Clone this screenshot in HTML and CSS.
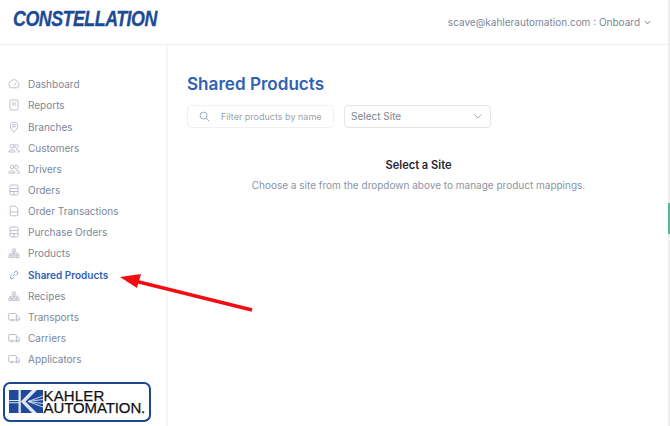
FILE: index.html
```html
<!DOCTYPE html>
<html lang="en">
<head>
<meta charset="utf-8">
<title>Shared Products</title>
<link rel="stylesheet" href="styles.css">
</head>
<body>
<svg width="0" height="0" class="defs">
  <symbol id="i-gauge" viewBox="0 0 12 12"><path d="M2.300 9.800a4.800 4.800 0 1 1 7.400 0z M6 7.500 8 4.500"/></symbol>
  <symbol id="i-doc" viewBox="0 0 12 12"><rect x="2" y="1" width="8" height="10" rx="1"/><path d="M4 4h4M4 6h4"/></symbol>
  <symbol id="i-pin" viewBox="0 0 12 12"><path d="M6 11.300C3.800 8.800 2.300 7 2.300 4.800a3.700 3.700 0 0 1 7.400 0C9.700 7 8.200 8.800 6 11.300z"/><circle cx="6" cy="4.800" r="1.400"/></symbol>
  <symbol id="i-users" viewBox="0 0 12 12"><circle cx="4" cy="4" r="1.800"/><circle cx="8.300" cy="4" r="1.800"/><path d="M.8 10c0-3 6.200-3 6.200 0zM8 7.400c1.800 0 3.300.9 3.300 2.600H9"/></symbol>
  <symbol id="i-calc" viewBox="0 0 12 12"><rect x="2" y="1" width="8" height="10" rx="1.200"/><path d="M2 4.500h8M2 7.500h8M6 7.500V11"/></symbol>
  <symbol id="i-file" viewBox="0 0 12 12"><path d="M2.200 2.200a1 1 0 0 1 1-1h4l2.600 2.600v6a1 1 0 0 1-1 1H3.200a1 1 0 0 1-1-1zM2.200 7h7.600"/></symbol>
  <symbol id="i-tree" viewBox="0 0 12 12"><rect x="4.800" y="2" width="2.400" height="2.400"/><rect x="1" y="8" width="2.400" height="2.400"/><rect x="4.800" y="8" width="2.400" height="2.400"/><rect x="8.600" y="8" width="2.400" height="2.400"/><path d="M6 4.400V8M2.200 8V6.200h7.600V8"/></symbol>
  <symbol id="i-link" viewBox="0 0 12 12"><path d="M5 7 7.200 4.800M4.300 5.500 2.800 7a1.600 1.600 0 0 0 2.300 2.300l1.500-1.500M5.500 4.300 7 2.800a1.600 1.600 0 0 1 2.300 2.300L7.800 6.600"/></symbol>
  <symbol id="i-truck" viewBox="0 0 12 12"><path d="M3 9H1.500a.8.800 0 0 1-.8-.8V3.300a.8.800 0 0 1 .8-.8h6a.8.800 0 0 1 .8.800V9H5M8.300 4.800h1.500l1.500 1.700V9h-1M8.300 9H8"/><circle cx="4" cy="9" r="1"/><circle cx="9.300" cy="9" r="1"/></symbol>
</svg>

<header class="topbar">
  <div class="brand">CONSTELLATION</div>
  <div class="user">
    <span>scave@kahlerautomation.com : Onboard</span>
    <svg class="user-caret" viewBox="0 0 8 8"><path d="M1 2.500 4 5.500 7 2.500"/></svg>
  </div>
</header>

<div class="shell">
  <aside class="sidebar">
    <nav class="nav">
      <a class="nav-item"><svg class="nav-icon"><use href="#i-gauge"/></svg>Dashboard</a>
      <a class="nav-item"><svg class="nav-icon"><use href="#i-doc"/></svg>Reports</a>
      <a class="nav-item"><svg class="nav-icon"><use href="#i-pin"/></svg>Branches</a>
      <a class="nav-item"><svg class="nav-icon"><use href="#i-users"/></svg>Customers</a>
      <a class="nav-item"><svg class="nav-icon"><use href="#i-users"/></svg>Drivers</a>
      <a class="nav-item"><svg class="nav-icon"><use href="#i-calc"/></svg>Orders</a>
      <a class="nav-item"><svg class="nav-icon"><use href="#i-file"/></svg>Order Transactions</a>
      <a class="nav-item"><svg class="nav-icon"><use href="#i-calc"/></svg>Purchase Orders</a>
      <a class="nav-item"><svg class="nav-icon"><use href="#i-tree"/></svg>Products</a>
      <a class="nav-item active"><svg class="nav-icon"><use href="#i-link"/></svg>Shared Products</a>
      <a class="nav-item"><svg class="nav-icon"><use href="#i-tree"/></svg>Recipes</a>
      <a class="nav-item"><svg class="nav-icon"><use href="#i-truck"/></svg>Transports</a>
      <a class="nav-item"><svg class="nav-icon"><use href="#i-truck"/></svg>Carriers</a>
      <a class="nav-item"><svg class="nav-icon"><use href="#i-truck"/></svg>Applicators</a>
    </nav>
    <div class="kahler">
      <svg class="kahler-mark" viewBox="0 0 34 23">
        <rect width="34" height="23" fill="#1f4a9c"/>
        <path d="M9.500 0h2.300v23H9.500zM0 10h9.500v1H0zM0 12.300h9.500v1H0z" fill="#dfe7f4"/>
        <path d="M11.800 11.500 23 0h5L16.500 11.500 28 23h-5z" fill="#dfe7f4"/>
        <path d="M19 11.500 34 6M19 11.500 34 9.500M19 11.500 34 13.500M19 11.500 34 17" stroke="#dfe7f4" stroke-width=".9"/>
      </svg>
      <div class="kahler-text">
        <span class="kahler-top">KAHLER</span>
        <span class="kahler-bottom">AUTOMATION.</span>
      </div>
    </div>
  </aside>

  <main class="content">
    <h1 class="title">Shared Products</h1>
    <div class="filters">
      <div class="search">
        <svg class="search-icon" viewBox="0 0 12 12"><circle cx="5" cy="5" r="3.800"/><path d="M8 8l3 3"/></svg>
        <span>Filter products by name</span>
      </div>
      <div class="select">
        <span>Select Site</span>
        <svg class="select-caret" viewBox="0 0 10 10"><path d="M1.500 3.500 5 7l3.500-3.500"/></svg>
      </div>
    </div>
    <section class="empty">
      <h2 class="empty-title">Select a Site</h2>
      <p class="empty-text">Choose a site from the dropdown above to manage product mappings.</p>
    </section>
  </main>
</div>

<div class="edge"><div class="edge-mark"></div></div>

<svg class="arrow" viewBox="0 0 670 426">
  <path d="M252 310 135 281" stroke="#f20d12" stroke-width="3.400" fill="none"/>
  <path d="M120 277 141 274 137 288z" fill="#f20d12"/>
</svg>
</body>
</html>
```
FILE: styles.css
```css
* { box-sizing: border-box; }
html, body { height: 100%; }
body {
  margin: 0;
  width: 670px;
  height: 426px;
  overflow: hidden;
  background: #fff;
  font-family: Inter, "Liberation Sans", sans-serif;
  display: flex;
  flex-direction: column;
  position: relative;
}
.defs { position: absolute; }

.topbar {
  height: 45px;
  flex: none;
  display: flex;
  align-items: flex-start;
  justify-content: space-between;
  border-bottom: 1px solid #eff0f3;
  padding: 7px 19px 0 13px;
}
.brand {
  font-family: "Liberation Sans", sans-serif;
  font-weight: 700;
  font-style: italic;
  font-size: 22px;
  line-height: 24px;
  letter-spacing: -0.6px;
  color: #1c4a97;
  -webkit-text-stroke: 0.3px #1c4a97;
  transform: scaleX(0.81);
  transform-origin: left center;
}
.user {
  display: flex;
  align-items: center;
  gap: 4px;
  font-size: 10px;
  line-height: 14px;
  color: #7c8798;
  margin-top: 8px;
}
.user-caret { width: 7px; height: 7px; fill: none; stroke: #667085; stroke-width: 1.100; }

.shell { flex: 1; display: flex; min-height: 0; }
.sidebar {
  width: 168px;
  flex: none;
  border-right: 2px solid #f6f6f9;
  padding: 28.700px 0 0 3px;
  display: flex;
  flex-direction: column;
}
.nav { display: flex; flex-direction: column; }
.nav-item {
  height: 21.150px;
  display: flex;
  align-items: center;
  padding-left: 5px;
  gap: 8px;
  font-size: 10px;
  color: #7c8798;
}
.nav-icon {
  width: 12px;
  height: 12px;
  flex: none;
  fill: none;
  stroke: #b3bac5;
  stroke-width: 0.900;
}
.nav-item.active { color: #2f62b5; font-weight: 600; }
.nav-item.active .nav-icon { stroke: #7d9ccf; }

.kahler {
  margin-top: 12.200px;
  width: 148px;
  height: 40px;
  border: 2.500px solid #1b4790;
  border-radius: 7px;
  background: #fff;
  display: flex;
  align-items: center;
  padding-left: 3.500px;
}
.kahler-mark { width: 34px; height: 23px; flex: none; }
.kahler-text {
  display: flex;
  flex-direction: column;
  font-family: "Liberation Sans", sans-serif;
  color: #111;
  margin-left: 1px;
  -webkit-text-stroke: 0.25px #111;
}
.kahler-top { font-size: 15px; line-height: 11.500px; letter-spacing: 0.150px; }
.kahler-bottom { font-size: 15px; line-height: 11.500px; letter-spacing: -0.100px; }

.content { flex: 1; padding: 28px 0 0 19px; }
.title {
  margin: 0;
  font-size: 17.100px;
  line-height: 21px;
  font-weight: 600;
  color: #2f62b5;
}
.filters { display: flex; gap: 10px; margin-top: 11px; }
.search {
  width: 147px;
  height: 23px;
  border: 1px solid #f0f1f4;
  border-radius: 4px;
  display: flex;
  align-items: center;
  padding-left: 11px;
  gap: 11px;
  font-size: 9px;
  color: #9aa3b1;
}
.search-icon { width: 11px; height: 11px; fill: none; stroke: #98a1ae; stroke-width: 1; }
.select {
  width: 147px;
  height: 23px;
  border: 1.500px solid #e4e5e9;
  border-radius: 4px;
  display: flex;
  align-items: center;
  justify-content: space-between;
  padding: 0 7px 1px 6px;
  font-size: 10px;
  color: #7c8490;
}
.select-caret { width: 10px; height: 10px; fill: none; stroke: #a9afba; stroke-width: 1; }

.empty { width: 465px; margin-left: -1px; text-align: center; padding-top: 29px; }
.empty-title {
  margin: 0;
  font-size: 11.100px;
  line-height: 16px;
  font-weight: 600;
  color: #1f2430;
}
.empty-text {
  margin: 5px 0 0;
  font-size: 10px;
  line-height: 14px;
  color: #8a94a3;
}

.edge {
  position: absolute;
  top: 0;
  right: 0;
  width: 2px;
  height: 100%;
  background: #eeeeee;
}
.edge-mark { height: 31px; margin-top: 203px; background: #55b99a; }
.arrow { position: absolute; inset: 0; width: 670px; height: 426px; pointer-events: none; }
```
